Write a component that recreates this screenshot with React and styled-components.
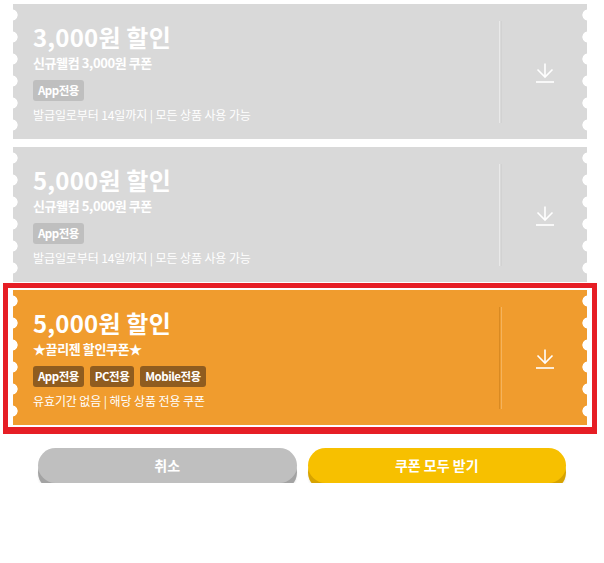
import styled, { createGlobalStyle } from "styled-components";

const GlobalStyle = createGlobalStyle`
  body {
    margin: 0;
    background: #fff;
    font-family: "Noto Sans CJK KR", "Noto Sans", sans-serif;
  }
`;

const Page = styled.div`
  width: 604px;
  padding-top: 4px;
`;

const List = styled.div`
  display: flex;
  flex-direction: column;
  gap: 8px;
  padding: 0 17px 0 13px;
`;

const Highlight = styled.div`
  margin: -7px -10px -9px;
  padding: 2px 5px;
  border: 5px solid #e61e25;
  border-bottom-width: 7px;
  background: #fff;
`;

const scallop = (side) =>
  `radial-gradient(circle at ${side === "left" ? "-1px" : "11px"} 11px, #fff 5.3px, transparent 5.9px) ${side} top / 10px 22px repeat-y`;

const Ticket = styled.div`
  height: 135px;
  display: flex;
  align-items: stretch;
  background: ${scallop("left")}, ${scallop("right")},
    ${(p) => (p.active ? "#f09c2e" : "#d9d9d9")};
  color: #fff;
`;

const Info = styled.div`
  flex: 1;
  display: flex;
  flex-direction: column;
  justify-content: center;
  padding: 3px 0 0 20px;
`;

const Title = styled.div`
  font-size: 24px;
  font-weight: 700;
  line-height: 26px;
  letter-spacing: 0.2px;
`;

const Sub = styled.div`
  font-size: 13px;
  font-weight: 700;
  line-height: 16px;
  margin-top: 5px;
  letter-spacing: -0.4px;
`;

const Badges = styled.div`
  display: flex;
  gap: 6px;
  margin-top: 9px;
`;

const Badge = styled.span`
  height: 21px;
  line-height: 21px;
  padding: 0 5px;
  border-radius: 3px;
  font-size: 11.5px;
  font-weight: 700;
  letter-spacing: -0.5px;
  background: ${(p) => (p.active ? "#8f5c1f" : "#bfbfbf")};
`;

const Note = styled.div`
  font-size: 12px;
  line-height: 16px;
  margin-top: 6px;
  letter-spacing: -0.1px;
`;

const Divider = styled.div`
  width: 1px;
  margin: 17px 0 16px;
  border-left: 1px solid ${(p) => (p.active ? "#d98a22" : "#e9e9e9")};
  border-right: 1px solid ${(p) => (p.active ? "#f5b35c" : "#d2d2d2")};
`;

const Action = styled.div`
  width: 85px;
  display: flex;
  align-items: center;
  justify-content: center;
  padding-top: 3px;
`;

const ButtonRow = styled.div`
  display: grid;
  grid-template-columns: 1fr 1fr;
  gap: 11px;
  padding: 0 38px;
  margin-top: 23px;
`;

const Button = styled.button`
  height: 35px;
  border: 0;
  border-radius: 18px;
  font-family: inherit;
  font-size: 14px;
  font-weight: 700;
  color: #fff;
  background: ${(p) => (p.primary ? "#f7c000" : "#bfbfbf")};
  box-shadow: 0 7px 0 ${(p) => (p.primary ? "#d7a300" : "#a3a3a3")},
    0 10px 2px rgba(0, 0, 0, 0.06);
  padding: 0 0 2px;
  cursor: pointer;
`;

const DownloadIcon = () => (
  <svg width="18" height="20" viewBox="0 0 18 20" fill="none" stroke="#fff" strokeWidth="1.6">
    <path d="M9 0.5V14" />
    <path d="M1.5 6.5L9 14L16.5 6.5" />
    <path d="M0 19H18" />
  </svg>
);

const coupons = [
  {
    id: 1,
    title: "3,000원 할인",
    sub: "신규웰컴 3,000원 쿠폰",
    badges: ["App전용"],
    note: "발급일로부터 14일까지 | 모든 상품 사용 가능",
  },
  {
    id: 2,
    title: "5,000원 할인",
    sub: "신규웰컴 5,000원 쿠폰",
    badges: ["App전용"],
    note: "발급일로부터 14일까지 | 모든 상품 사용 가능",
  },
  {
    id: 3,
    title: "5,000원 할인",
    sub: "★끌리젠 할인쿠폰★",
    badges: ["App전용", "PC전용", "Mobile전용"],
    note: "유효기간 없음 | 해당 상품 전용 쿠폰",
    active: true,
  },
];

const Coupon = ({ item }) => (
  <Ticket active={item.active}>
    <Info>
      <Title>{item.title}</Title>
      <Sub>{item.sub}</Sub>
      <Badges>
        {item.badges.map((b) => (
          <Badge key={b} active={item.active}>
            {b}
          </Badge>
        ))}
      </Badges>
      <Note>{item.note}</Note>
    </Info>
    <Divider active={item.active} />
    <Action>
      <DownloadIcon />
    </Action>
  </Ticket>
);

const App = () => {
  return (
    <Page>
      <GlobalStyle />
      <List>
        {coupons.map((item) =>
          item.active ? (
            <Highlight key={item.id}>
              <Coupon item={item} />
            </Highlight>
          ) : (
            <Coupon key={item.id} item={item} />
          )
        )}
      </List>
      <ButtonRow>
        <Button>취소</Button>
        <Button primary>쿠폰 모두 받기</Button>
      </ButtonRow>
    </Page>
  );
};

export default App;
